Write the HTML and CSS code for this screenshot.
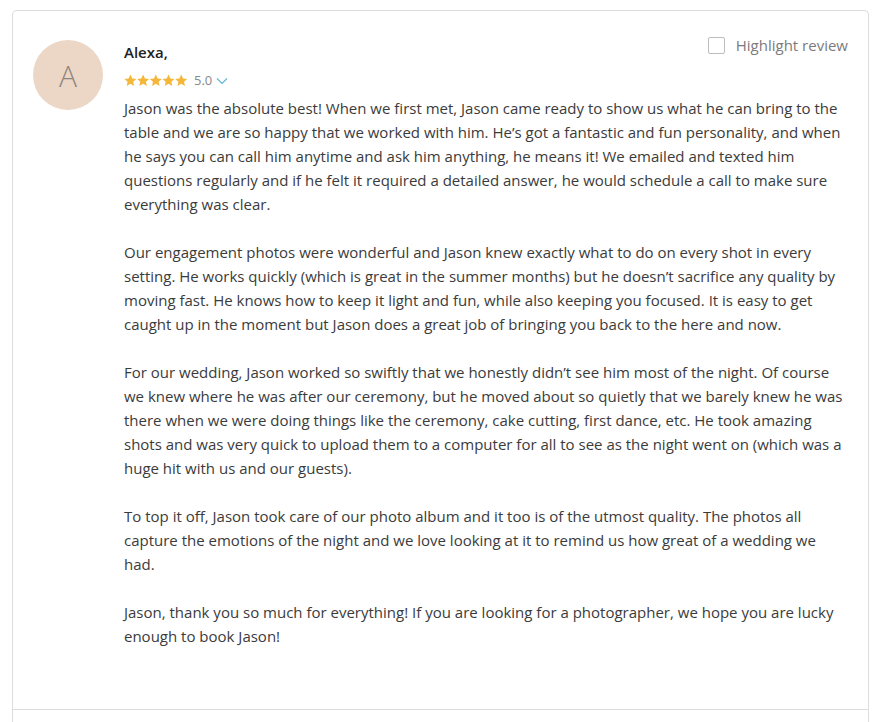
FILE: index.html
```html
<!DOCTYPE html>
<html>
<head>
<meta charset="utf-8">
<link rel="stylesheet" href="styles.css">
</head>
<body>
<div class="card">
  <div class="review">
    <div class="avatar">A</div>
    <div class="content">
      <div class="head">
        <div class="who">
          <div class="name">Alexa,</div>
          <div class="rating">
            <span class="stars">
              <svg viewBox="0 0 64 13" width="64" height="13">
                <g fill="#f4b73a">
                  <path id="s" d="M6.4 0.6l1.8 3.9 4.2 0.4-3.2 2.8 1 4.2-3.8-2.2-3.8 2.2 1-4.2-3.2-2.8 4.2-0.4z"/>
                  <use href="#s" x="12.7"/>
                  <use href="#s" x="25.4"/>
                  <use href="#s" x="38.1"/>
                  <use href="#s" x="50.8"/>
                </g>
              </svg>
            </span>
            <span class="score">5.0</span>
            <svg class="chev" viewBox="0 0 12 8" width="12" height="8"><path d="M1 1.5l5 5 5-5" fill="none" stroke="#62b4d6" stroke-width="1.2"/></svg>
          </div>
        </div>
        <label class="highlight"><span class="box"></span>Highlight review</label>
      </div>
      <div class="text">
        <p>Jason was the absolute best! When we first met, Jason came ready to show us what he can bring to the table and we are so happy that we worked with him. He’s got a fantastic and fun personality, and when he says you can call him anytime and ask him anything, he means it! We emailed and texted him questions regularly and if he felt it required a detailed answer, he would schedule a call to make sure everything was clear.</p>
        <p>Our engagement photos were wonderful and Jason knew exactly what to do on every shot in every setting. He works quickly (which is great in the summer months) but he doesn’t sacrifice any quality by moving fast. He knows how to keep it light and fun, while also keeping you focused. It is easy to get caught up in the moment but Jason does a great job of bringing you back to the here and now.</p>
        <p>For our wedding, Jason worked so swiftly that we honestly didn’t see him most of the night. Of course we knew where he was after our ceremony, but he moved about so quietly that we barely knew he was there when we were doing things like the ceremony, cake cutting, first dance, etc. He took amazing shots and was very quick to upload them to a computer for all to see as the night went on (which was a huge hit with us and our guests).</p>
        <p>To top it off, Jason took care of our photo album and it too is of the utmost quality. The photos all capture the emotions of the night and we love looking at it to remind us how great of a wedding we had.</p>
        <p>Jason, thank you so much for everything! If you are looking for a photographer, we hope you are lucky enough to book Jason!</p>
      </div>
    </div>
  </div>
  <div class="footer"></div>
</div>
</body>
</html>
```
FILE: styles.css
```css
* { box-sizing: border-box; }
body {
  margin: 0;
  background: #fff;
  font-family: "Open Sans", "Liberation Sans", sans-serif;
  color: #3b3b3b;
}
.card {
  margin: 10px 11px 0 12px;
  border: 1px solid #dcdcdc;
  border-bottom: none;
  border-radius: 5px 5px 0 0;
  height: 730px;
}
.review {
  display: flex;
  padding: 29px 19px 0 20px;
  height: 699px;
  border-bottom: 1px solid #dcdcdc;
}
.avatar {
  width: 70px;
  height: 70px;
  border-radius: 50%;
  background: #ecd6c5;
  color: #8c8680;
  font-size: 30px;
  font-weight: 300;
  display: flex;
  align-items: center;
  justify-content: center;
  flex: none;
}
.content {
  flex: 1;
  margin-left: 21px;
}
.head {
  display: flex;
  justify-content: space-between;
  align-items: flex-start;
}
.name {
  font-weight: 600;
  font-size: 15px;
  color: #222;
  margin-top: 1px;
  line-height: 22px;
}
.rating {
  display: flex;
  align-items: center;
  margin-top: 9px;
  height: 16px;
}
.stars svg { display: block; }
.score {
  font-size: 13px;
  color: #888;
  margin-left: 6px;
}
.chev { margin-left: 4px; margin-top: 1px; }
.highlight {
  display: flex;
  align-items: center;
  font-size: 15px;
  color: #7b7b7b;
  margin-top: -5px;
  margin-right: 1px;
}
.box {
  width: 17px;
  height: 17px;
  border: 1px solid #bdbdbd;
  border-radius: 2px;
  margin-right: 11px;
}
.text {
  margin-top: 8px;
  font-size: 15px;
  line-height: 24px;
}
.text p { margin: 0 0 24px; }
```
